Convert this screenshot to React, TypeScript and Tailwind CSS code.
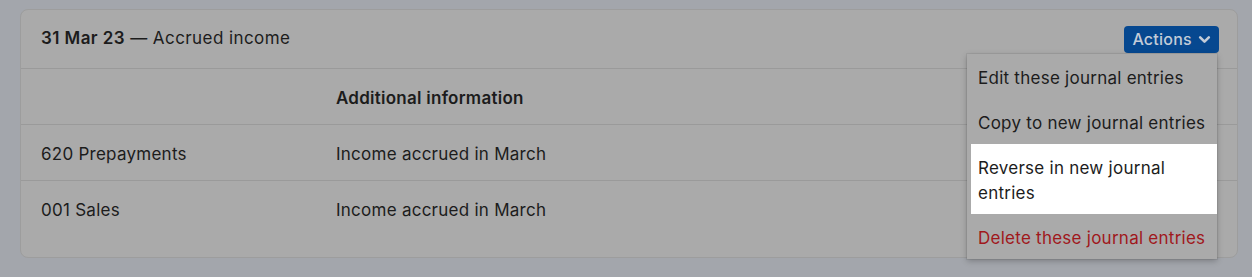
import React from 'react';

const ROWS = [
  { account: '620 Prepayments', info: 'Income accrued in March' },
  { account: '001 Sales', info: 'Income accrued in March' },
];

const MENU = [
  { label: 'Edit these journal entries' },
  { label: 'Copy to new journal entries' },
  { label: 'Reverse in new journal entries', active: true },
  { label: 'Delete these journal entries', danger: true },
];

export default function App() {
  return (
    <div
      className="min-h-[277px] w-full bg-[#a3a6ac] pt-[9px] pl-5 pr-[14px] text-[17px] tracking-[0.015em] text-[#1c1c1c]"
      style={{ fontFamily: 'Inter, "Noto Sans", sans-serif' }}
    >
      <div className="relative rounded-lg border border-[#9d9d9d] bg-[#aaaaaa] pb-5">
        {/* Header */}
        <div className="flex h-[59px] items-center justify-between border-b border-[#9a9a9a] pl-5 pr-[18px]">
          <div className="tracking-[0.025em]">
            <span className="font-semibold">31 Mar 23</span> — Accrued income
          </div>
          <button className="flex h-[27px] items-center gap-1.5 rounded bg-[#064890] pl-2 pr-2 text-[16px] font-medium text-[#c3ccd8]">
            Actions
            <svg width="13" height="13" viewBox="0 0 12 12" fill="none">
              <path d="M2 4l4 4 4-4" stroke="currentColor" strokeWidth="2.4" strokeLinecap="round" strokeLinejoin="round" />
            </svg>
          </button>
        </div>

        {/* Table */}
        <div className="flex h-[56px] items-center border-b border-[#9a9a9a] pl-5 pt-1">
          <div className="w-[295px]" />
          <div className="font-semibold">Additional information</div>
        </div>
        {ROWS.map((r, i) => (
          <div
            key={r.account}
            className={`flex h-[56px] items-center pl-5 pt-1 ${i < ROWS.length - 1 ? 'border-b border-[#9a9a9a]' : ''}`}
          >
            <div className="w-[295px]">{r.account}</div>
            <div>{r.info}</div>
          </div>
        ))}

        {/* Actions menu */}
        <div className="absolute right-[20px] top-[44px] w-[250px] bg-[#aaaaaa] shadow-[0_2px_6px_rgba(0,0,0,0.25),0_0_0_1px_rgba(0,0,0,0.06)]">
          {MENU.map(m => (
            <div
              key={m.label}
              className={`ml-1 pt-3 pb-2 pl-[7px] pr-[7px] leading-[25px] ${m.active ? 'bg-white text-[#1c1c1c]' : ''} ${m.danger ? 'text-[#a0181c]' : ''}`}
            >
              {m.label}
            </div>
          ))}
        </div>
      </div>
    </div>
  );
}
